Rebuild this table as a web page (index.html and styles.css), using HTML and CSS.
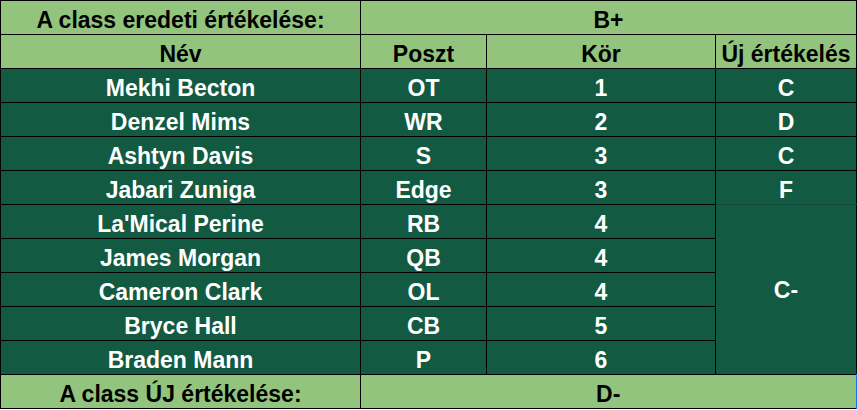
FILE: index.html
```html
<!DOCTYPE html>
<html lang="hu">
<head>
<meta charset="utf-8">
<title>Draft értékelés</title>
<link rel="stylesheet" href="styles.css">
</head>
<body>
<table class="grades">
  <colgroup>
    <col class="c-name">
    <col class="c-pos">
    <col class="c-round">
    <col class="c-new">
  </colgroup>
  <tr class="light">
    <td>A class eredeti értékelése:</td>
    <td colspan="3">B+</td>
  </tr>
  <tr class="light">
    <td>Név</td>
    <td>Poszt</td>
    <td>Kör</td>
    <td>Új értékelés</td>
  </tr>
  <tr class="dark"><td>Mekhi Becton</td><td>OT</td><td>1</td><td>C</td></tr>
  <tr class="dark"><td>Denzel Mims</td><td>WR</td><td>2</td><td>D</td></tr>
  <tr class="dark"><td>Ashtyn Davis</td><td>S</td><td>3</td><td>C</td></tr>
  <tr class="dark"><td>Jabari Zuniga</td><td>Edge</td><td>3</td><td class="soft-bottom">F</td></tr>
  <tr class="dark"><td>La'Mical Perine</td><td>RB</td><td>4</td><td rowspan="5" class="merged">C-</td></tr>
  <tr class="dark"><td>James Morgan</td><td>QB</td><td>4</td></tr>
  <tr class="dark"><td>Cameron Clark</td><td>OL</td><td>4</td></tr>
  <tr class="dark"><td>Bryce Hall</td><td>CB</td><td>5</td></tr>
  <tr class="dark"><td>Braden Mann</td><td>P</td><td>6</td></tr>
  <tr class="light">
    <td>A class ÚJ értékelése:</td>
    <td colspan="3" class="selected">D-</td>
  </tr>
</table>
</body>
</html>
```

FILE: styles.css
```css
html, body {
  margin: 0;
  padding: 0;
  background: #ffffff;
}

.grades {
  border-collapse: collapse;
  table-layout: fixed;
  width: 856px;
  font-family: "Liberation Sans", Arial, sans-serif;
  font-weight: bold;
  font-size: 23px;
}

.c-name { width: 360px; }
.c-pos { width: 126px; }
.c-round { width: 229px; }
.c-new { width: 141px; }

.grades td {
  border: 1px solid #000000;
  height: 34px;
  padding: 4px 0 0 0;
  box-sizing: border-box;
  text-align: center;
  vertical-align: middle;
  white-space: nowrap;
  line-height: 26px;
}

.light td {
  background: #93c47d;
  color: #000000;
}

.dark td {
  background: #135a43;
  color: #ffffff;
}

.grades td.soft-bottom {
  border-bottom-color: #0f4a37;
}

.grades td.merged {
  padding-top: 0;
  border-top-color: #0f4a37;
}

.grades td.selected {
  border-right: 2px solid #1a73e8;
}
```
